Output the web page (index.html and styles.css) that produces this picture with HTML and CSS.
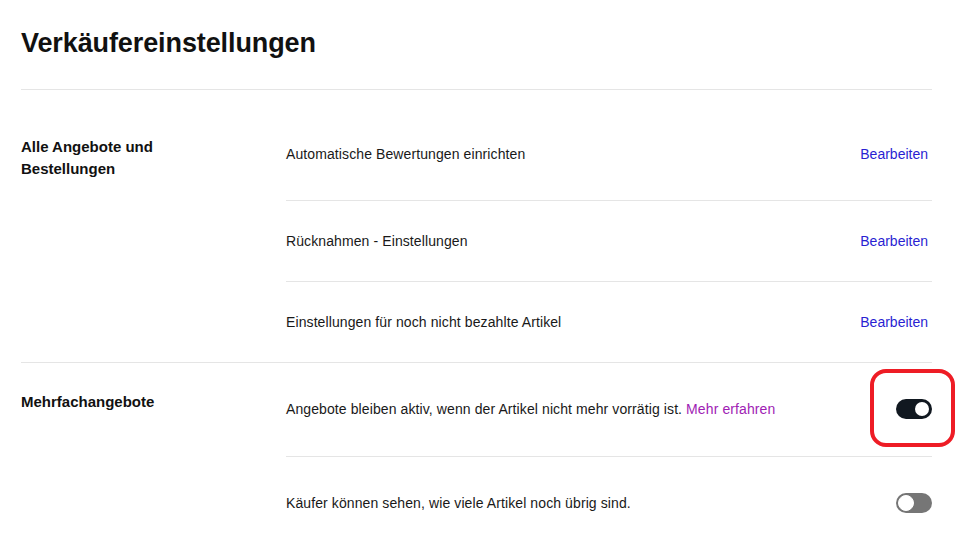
FILE: index.html
```html
<!DOCTYPE html>
<html lang="de">
<head>
<meta charset="utf-8">
<title>Verkäufereinstellungen</title>
<link rel="stylesheet" href="styles.css">
</head>
<body>
<main class="page">
  <h1 class="title">Verkäufereinstellungen</h1>

  <section class="section section-orders">
    <h2 class="label">Alle Angebote und<br>Bestellungen</h2>
    <div class="rows">
      <div class="row row-first">
        <span class="row-text">Automatische Bewertungen einrichten</span>
        <a class="edit" href="#">Bearbeiten</a>
      </div>
      <div class="row">
        <span class="row-text">Rücknahmen - Einstellungen</span>
        <a class="edit" href="#">Bearbeiten</a>
      </div>
      <div class="row">
        <span class="row-text">Einstellungen für noch nicht bezahlte Artikel</span>
        <a class="edit" href="#">Bearbeiten</a>
      </div>
    </div>
  </section>

  <section class="section section-multi">
    <h2 class="label">Mehrfachangebote</h2>
    <div class="rows">
      <div class="row row-tall">
        <span class="row-text">Angebote bleiben aktiv, wenn der Artikel nicht mehr vorrätig ist. <a class="more" href="#">Mehr erfahren</a></span>
        <span class="toggle-wrap">
          <span class="toggle toggle-on"><span class="knob"></span></span>
          <span class="highlight"></span>
        </span>
      </div>
      <div class="row row-tall">
        <span class="row-text">Käufer können sehen, wie viele Artikel noch übrig sind.</span>
        <span class="toggle-wrap">
          <span class="toggle toggle-off"><span class="knob"></span></span>
        </span>
      </div>
    </div>
  </section>
</main>
</body>
</html>
```

FILE: styles.css
```css
html, body {
  margin: 0;
  padding: 0;
  overflow: hidden;
  background: #ffffff;
}

body {
  font-family: "Liberation Sans", Arial, sans-serif;
  color: #191919;
  font-size: 14px;
}

.page {
  padding: 0 30px 0 21px;
}

.title {
  margin: 0;
  padding-top: 27px;
  padding-bottom: 30px;
  font-size: 27px;
  line-height: 32px;
  font-weight: 700;
  color: #111111;
  letter-spacing: -0.1px;
}

.section {
  display: grid;
  grid-template-columns: 265px 1fr;
  border-top: 1px solid #e5e5e5;
}

.label {
  margin: 0;
  font-size: 15px;
  line-height: 22px;
  font-weight: 700;
  color: #111111;
}

.section-orders .label {
  padding-top: 46px;
}

.section-multi .label {
  padding-top: 28px;
}

.rows {
  display: flex;
  flex-direction: column;
}

.row {
  display: flex;
  align-items: center;
  justify-content: space-between;
  padding: 30px 0;
  border-bottom: 1px solid #e5e5e5;
  line-height: 20px;
}

.row:last-child {
  border-bottom: none;
}

.row-first {
  padding: 54px 0 36px;
}

.row-tall {
  padding: 36px 0 37px;
}

.row-text {
  color: #191919;
  letter-spacing: 0.1px;
}

.edit {
  color: #2a1fd2;
  text-decoration: none;
  padding-right: 4px;
}

.more {
  color: #a01db4;
  text-decoration: none;
}

.toggle-wrap {
  position: relative;
  display: flex;
}

.toggle {
  display: flex;
  align-items: center;
  width: 36px;
  height: 20px;
  border-radius: 10px;
  box-sizing: border-box;
}

.toggle-on {
  background: #111820;
  justify-content: flex-end;
  padding: 0 3px;
}

.toggle-on .knob {
  width: 14px;
  height: 14px;
  border-radius: 50%;
  background: #ffffff;
}

.toggle-off {
  background: #767676;
  justify-content: flex-start;
  padding: 0 2px;
}

.toggle-off .knob {
  width: 14px;
  height: 14px;
  border-radius: 50%;
  background: #ffffff;
  border: 1px solid #ffffff;
  box-shadow: 0 0 0 1px #767676;
}

.highlight {
  position: absolute;
  top: -30px;
  left: -26px;
  right: -23px;
  bottom: -28px;
  border: 4px solid #ee1c25;
  border-radius: 16px;
  pointer-events: none;
}
```
